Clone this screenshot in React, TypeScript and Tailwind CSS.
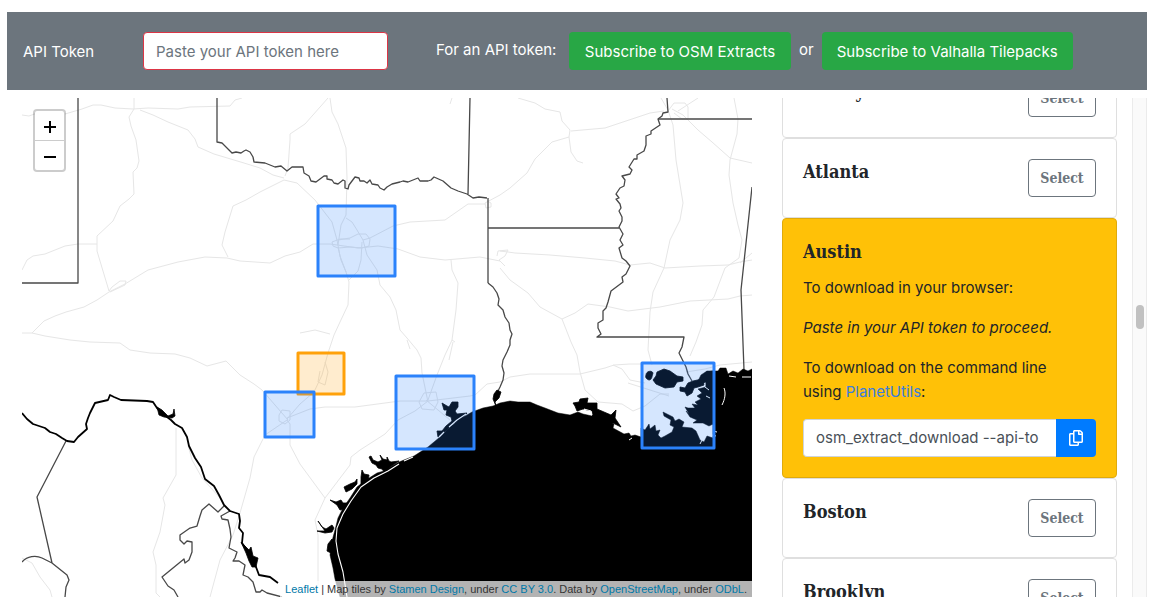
import { useEffect, useRef, useState } from "react";
import { FaRegCopy } from "react-icons/fa";

const CITIES = ["Albany", "Atlanta", "Austin", "Boston", "Brooklyn"];

const SLAB = "font-['DejaVu_Serif_Condensed','DejaVu_Serif',serif] font-bold";

/* Extract bounding boxes, in map units */
const EXTRACTS = [
  { name: "Austin", x: 298, y: 353, w: 46, h: 41 },
  { name: "Dallas", x: 318, y: 206, w: 77, h: 70 },
  { name: "San Antonio", x: 265, y: 392, w: 49, h: 45 },
  { name: "Houston", x: 396, y: 376, w: 78, h: 73 },
  { name: "New Orleans", x: 642, y: 363, w: 72, h: 85 },
];

const ROADS = [
  "M22 115L29 116L40 112M65 114L82 109L93 105L101 105L115 108L133 109L148 108L178 109L190 107L230 106L235 100L242 98",
  "M134 98V109L129 117L131 126L136 140L139 161L137 168L133 172L134 194L129 199L120 206L113 221L97 236V251L109 291",
  "M140 110L153 115L168 122L188 130L195 139L198 147L214 154L244 163L260 168L273 175L284 178",
  "M22 270L27 260L33 256L45 254L65 246L78 244H97",
  "M22 333H32L44 321L55 316L66 312L84 307L97 300L109 292L125 284L148 270L178 262L205 257L227 258L240 261L270 263L285 256L300 252L313 244L330 244L358 248L378 246L398 249L420 257L445 260L480 257L500 261",
  "M109 291L112 287L120 281H126L125 285L110 292",
  "M32 333L45 336L70 340L90 342L120 343L130 350L150 353L175 354L190 358L207 366L226 361L240 375L254 384L262 390L288 420",
  "M228 257L222 245L225 232L233 206L246 200L260 192L284 180L297 183L315 200L332 222L337 240L340 256L346 272L349 282L348 305L340 322L334 335L328 353L322 375L314 392L300 404L287 419",
  "M285 176L288 168L290 140L290 134L305 124L328 98M330 98L332 112L338 124L346 148L347 178L346 215L341 225L338 245",
  "M346 218L352 222L357 230L363 240L367 255L377 270L380 285L390 297L396 310L400 330L407 338L417 350L421 358L422 373L428 402",
  "M338 240L350 238L358 234L366 234L370 239L369 246L362 248L350 247L338 248L333 246L332 242L340 239H350M363 240L370 238L393 226L410 222L445 220L468 204H485",
  "M362 242L361 260L358 271L349 280M338 247L341 260L346 272",
  "M300 333L315 330L330 334M451 260L452 270L458 283L456 310L452 340L445 355L437 375L428 400",
  "M487 201L491 203V207L486 208L485 203L500 195L510 188L527 173L535 159L552 142L569 137L570 130L562 121L560 112L545 109L535 103L518 98",
  "M569 137L571 152L577 161L583 163M571 131L605 128L632 119L650 113L664 111",
  "M500 251L508 252L515 253L550 255L585 258L615 261L630 265L650 263L665 268L700 266L728 265L740 262L752 260",
  "M500 268L510 280L528 293L540 307L562 319L571 342L577 355L580 372L585 390L598 402L622 404L633 411L645 406L660 394L669 394",
  "M497 256L498 251L508 250L505 256L499 260L505 266M562 319L575 313L588 304L610 307L628 311L660 307L690 301L728 299L740 296L752 295",
  "M661 98L668 110L673 125L676 160L683 203L680 220L670 240L664 268L653 292L650 312L648 350L652 365",
  "M668 111L674 103L685 103L688 107V119L682 119L674 113M672 109L683 115L698 130L712 142L730 158L752 163M678 111L698 98",
  "M734 98L738 119L737 134L730 160L729 175L733 203L738 225L742 240L739 258L725 268L714 297L703 310L702 325L696 342L690 356M740 263L752 253",
  "M287 420L290 424V445L300 464L325 498L350 465L351 457L360 450L385 434L398 420L415 411L428 401L470 396L475 395L487 384L500 382L510 377L530 374H580L605 368L614 365L630 364L641 364",
  "M287 418L310 409L325 407L355 407L400 401H428M279 415L282 410L290 411V420L285 424L279 421ZM424 393L436 392L438 402L434 410L422 409L419 402Z",
  "M325 362L328 372L325 385L318 382L320 371M325 498L315 520L318 535V585M287 420L265 435L254 457L250 478L240 513L233 535L220 560L210 597",
  "M613 365L622 369L630 380L645 383M176 428V475L163 498L165 505L160 532L153 552L156 565V593L160 597M22 558L32 563L40 577L50 590L52 597",
  "M188 445L192 460L202 478L220 498M455 342L452 340M426 400L450 420M452 98L450 104",
  "M407 340L410 349M453 342L449 360M628 383L650 390L669 396M686 372L705 369L720 365L752 362",
];

const BORDERS = [
  "M78 98V283H22",
  "M217 98V142L222 143L232 153L236 152L241 153L244 151L246 150L250 152L253 157L254 162L265 163L275 167L281 166L287 171L292 167H303L304 173L309 176L311 181L316 182L324 176L327 176V179L332 180L334 183L338 184L343 180L345 181V188L348 189L349 185L352 181L355 177L359 178L360 181L364 181L367 183L370 180L372 184L378 185L380 188L384 190L387 187L392 184L400 182L403 181L408 182L418 178L420 181L428 181L431 180L434 177L443 181L451 188L458 191L467 194L473 198L479 197L487 198",
  "M470 98L468 194M488 198V283M488 228H619",
  "M488 283L493 287L497 293L499 299L498 305L503 310L505 317L509 323L510 330L512 334L510 340L510 345L507 352L503 360L502 366L504 373L503 380L500 387L497 393",
  "M667 98L668 112L663 113L662 116L658 119L660 125L651 131V134L646 136V145L644 151L637 155L637 159L634 159L629 167L632 170L630 174L622 176L625 180L624 186L620 188L616 194L619 198L616 199L620 204L621 208L619 211L622 217V221L619 227L623 234L620 240L623 245L619 248L622 258L626 261L630 266L626 274L622 277L623 282L611 291L608 302L606 308L603 311V320L598 323V328L601 334L597 337H684L682 347L679 353L682 359L686 367L688 374L692 381",
  "M658 119H752M752 187L741 290L744 370",
  "M66 441L37 497L52 563M22 562C27 556 36 555 42 558L52 563L67 575L69 580L66 587L65 597",
  "M224 506L218 512L209 504L202 510L200 516L197 526L190 528L180 535L180 540L184 544L187 541L192 542V552L189 560L185 563L184 559L162 577L168 586L174 590L178 597",
  "M230 511L221 516L222 519L228 520L230 529L231 537L229 548L237 552L235 558L233 561L239 561L245 565L243 575L248 577L253 582L256 592H260L262 590L267 593L282 597",
];

const RIO_GRANDE =
  "M22 413L27 419L33 424L45 428L50 432L56 434L62 438L67 441L74 442L78 437L87 429L86 424L88 418L90 413L95 403L108 400L110 395L114 397L121 400L147 401L153 402L157 408L163 414L171 420L175 424L182 428L187 437L189 446L195 458L201 467L205 479L214 486L219 495L224 505L230 511L239 514L240 521L239 528L243 533L242 543L249 553L256 567L259 575L270 577L278 583";

const GULF =
  "M752 369L748 371L743 369L738 373L733 371L728 374L726 368L720 368L718 371L707 371L701 375L698 381L702 384L708 381L706 387L698 389L702 393L697 396L701 399L695 402L698 405L692 404L695 408L688 408L685 407L689 414L686 411L690 417L697 420L693 423L703 423L709 426L713 424V438L707 436L704 442L700 440L696 431L692 428L682 427L684 422L679 419L675 421L673 417L663 412L664 416L671 420L670 425L674 427L672 432L665 436L661 438L658 435L660 430L656 431L655 425L650 429L649 424L645 430L641 428V437L635 435L631 436L629 433L624 434L613 428L614 424L609 422L606 420L598 420L593 414L592 416L583 414L578 412L570 415L558 413L545 408L537 405L530 402L518 402L510 401L500 403L493 406L483 408L472 412L462 418L451 426L440 437L428 447L414 456L399 462L392 466L384 471L377 473L366 480L357 487L350 498L343 508L338 518L335 530L332 541L330 555L333 568L335 579L340 597H752Z";

const BAYS = [
  "M442 403L447 406L449 407L452 402L458 402L458 407L455 411L457 414L467 413L461 420L452 424L447 430L438 437L437 431L442 431L446 426L452 421L451 417L446 415L447 410L444 410Z",
  "M369 457L371 456L373 460L378 462L382 460L380 455L383 459L387 460L387 457L389 461L391 462L399 461L390 467L385 473L382 469L378 468L376 465L372 463Z",
  "M362 470L364 474L369 475L368 482L361 486L361 477Z",
  "M344 487L350 484L355 482L357 479V484L352 489L346 492Z",
  "M330 500L336 502L341 500L343 503L348 503L344 509L340 510L337 505Z",
  "M318 521L322 527L326 529L332 525L334 528L332 532L325 533L317 531L325 531Z",
  "M328 544L332 539L336 546L333 554L327 551Z",
  "M497 390L501 392L499 398L495 402L496 406L493 399L494 394Z",
  "M573 403L579 402L580 399L588 398L587 403L597 403L597 409L604 412L611 415L616 410L615 418L621 427L613 423L609 425L598 421L593 417L592 411L583 409L577 411L575 406Z",
  "M653 380L656 376L657 372L664 369L670 371L677 376L683 377V381L677 382L674 387L665 388L656 384Z",
  "M680 387L685 388L688 383L693 381L702 379L704 385L698 387L694 388L692 393L687 396L685 392L680 391Z",
  "M646 375C646 371 652 370 653 373C652 376 652 380 649 380C646 379 645 377 646 375Z",
  "M706 372L713 371V424L706 422Z",
  "M157 407L162 410L168 416L173 414L174 409L175 416L172 418L164 417L159 415Z",
  "M241 542L249 550L251 547L253 556L258 558L256 567L252 567L249 561L246 553Z",
];

function MapDrawing({ selected }: { selected: string }) {
  return (
    <svg
      viewBox="22 98 730 499"
      preserveAspectRatio="xMidYMid slice"
      className="block h-full w-full"
      fill="none"
      strokeLinejoin="round"
      role="img"
      aria-label="Map of available extracts"
    >
      <g stroke="#e6e6e6" strokeWidth="1">
        {ROADS.map((d) => <path key={d} d={d} />)}
      </g>
      <g stroke="#484848" strokeWidth="1.3">
        {BORDERS.map((d) => <path key={d} d={d} />)}
      </g>
      <path d={RIO_GRANDE} stroke="#000" strokeWidth="1.8" />
      <path d={GULF} fill="#000" stroke="#000" strokeWidth="0.5" />
      <g fill="#000" stroke="#000" strokeWidth="0.8">
        {BAYS.map((d) => <path key={d} d={d} />)}
      </g>
      {/* barrier islands */}
      <path
        d="M466 414L457 420L449 427M444 432L439 437M413 457L404 461M399 464L388 471L374 478L361 487L351 501L343 514L337 528L336 541L338 554L343 572L347 597"
        stroke="#fff"
        strokeWidth="1.1"
      />
      <path
        d="M584 409L591 411L592 415L586 412ZM700 444L704 436M724 388C726 393 725 399 722 405M729 376L736 377M742 377H751M713 431L717 432M712 435L716 436M632 438L629 440M705 387L709 390M706 396L710 398"
        stroke="#fff"
        strokeWidth="1"
      />
      <g strokeWidth="3" fillOpacity="0.2">
        {EXTRACTS.map((e) => {
          const color = e.name === selected ? "#ffa10a" : "#2b82fb";
          return <rect key={e.name} x={e.x} y={e.y} width={e.w} height={e.h} stroke={color} fill={color} />;
        })}
      </g>
    </svg>
  );
}

function ExtractMap({ selected }: { selected: string }) {
  const link = "text-[#0078a8]";
  return (
    <div className="relative h-full overflow-hidden bg-white">
      <MapDrawing selected={selected} />
      <div className="absolute left-[11px] top-[11px] flex flex-col rounded border-2 border-black/20 bg-white bg-clip-padding">
        <button aria-label="Zoom in" className="flex h-[30px] w-[29px] items-center justify-center border-b border-[#ccc] pt-0.5">
          <svg width="14" height="14" viewBox="0 0 14 14" stroke="#000" strokeWidth="2"><path d="M1 7H13M7 1V13" /></svg>
        </button>
        <button aria-label="Zoom out" className="flex h-[29px] w-[29px] items-center justify-center pt-0.5">
          <svg width="14" height="14" viewBox="0 0 14 14" stroke="#000" strokeWidth="2"><path d="M1 7H13" /></svg>
        </button>
      </div>
      <div className="absolute bottom-0 right-0 whitespace-nowrap bg-white/70 px-[5px] font-['Liberation_Sans',sans-serif] text-[11px] leading-4 text-[#333]">
        <a href="#leaflet" className={link}>Leaflet</a> | Map tiles by <a href="#stamen" className={link}>Stamen Design</a>, under{" "}
        <a href="#cc-by" className={link}>CC BY 3.0</a>. Data by <a href="#osm" className={link}>OpenStreetMap</a>, under{" "}
        <a href="#odbl" className={link}>ODbL</a>.
      </div>
    </div>
  );
}

function CityCard({ name, active, onSelect }: { name: string; active: boolean; onSelect: () => void }) {
  if (!active) {
    return (
      <li className="flex items-start justify-between rounded border border-[#dfdfdf] bg-white p-5">
        <h5 className={`${SLAB} text-lg leading-[26px]`}>{name}</h5>
        <button
          onClick={onSelect}
          className={`${SLAB} h-[38px] w-[68px] rounded border border-[#6c757d] text-sm text-[#6c757d]`}
        >
          Select
        </button>
      </li>
    );
  }
  return (
    <li className="rounded border border-[#dfaa0c] bg-[#ffc107] p-5">
      <h5 className={`${SLAB} mb-[11px] text-lg leading-[26px]`}>{name}</h5>
      <p className="mb-4">To download in your browser:</p>
      <p className="mb-4 italic">Paste in your API token to proceed.</p>
      <p className="mb-[15px] pr-5">
        To download on the command line using <a href="#planetutils" className="text-[#3b7ddd]">PlanetUtils</a>:
      </p>
      <div className="flex h-[38px]">
        <input
          readOnly
          aria-label="Download command"
          value="osm_extract_download --api-to"
          className="min-w-0 flex-1 rounded-l border border-r-0 border-[#ced4da] bg-white px-3 text-[#495057] outline-none"
        />
        <button aria-label="Copy command" className="flex w-10 items-center justify-center rounded-r bg-[#007bff] text-white">
          <FaRegCopy size={16} />
        </button>
      </div>
    </li>
  );
}

export default function App() {
  const [selected, setSelected] = useState("Austin");
  const listRef = useRef<HTMLDivElement>(null);

  useEffect(() => {
    if (listRef.current) listRef.current.scrollTop = 40;
  }, []);

  const subscribe = "flex h-[38px] items-center justify-center rounded bg-[#28a745] pt-0.5 text-white";

  return (
    <div className="flex h-screen flex-col bg-white pb-1 pl-[7px] pr-[5px] pt-3 font-['Inter',sans-serif] text-[15px] leading-6 text-[#212529]">
      <header className="flex items-center bg-[#6c757d] px-4 py-5 text-white">
        <label htmlFor="token" className="w-[120px] pt-0.5">API Token</label>
        <input
          id="token"
          placeholder="Paste your API token here"
          className="h-[38px] w-[245px] rounded border border-[#dc3545] bg-white px-3 text-[#495057] outline-none placeholder:text-[#6c757d]"
        />
        <div className="ml-12 flex items-center gap-2 whitespace-nowrap">
          <span className="w-[125px] pb-0.5">For an API token:</span>
          <a href="#osm-extracts" className={`${subscribe} w-[222px]`}>Subscribe to OSM Extracts</a>
          <span className="pb-0.5">or</span>
          <a href="#valhalla" className={`${subscribe} w-[251px]`}>Subscribe to Valhalla Tilepacks</a>
        </div>
      </header>

      <main className="mt-2 flex min-h-0 flex-1">
        <section className="w-2/3 px-[15px]">
          <ExtractMap selected={selected} />
        </section>
        <section className="flex w-1/3 pl-[15px]">
          <div ref={listRef} className="min-w-0 flex-1 overflow-y-auto pr-[15px] [scrollbar-width:none]">
            <ul>
              {CITIES.map((city) => (
                <CityCard key={city} name={city} active={city === selected} onSelect={() => setSelected(city)} />
              ))}
            </ul>
          </div>
          <div className="flex w-[15px] flex-col items-center border-x border-[#ebebeb] bg-[#fafafa]">
            <div className="h-[207px]" />
            <div className="h-6 w-2 rounded-full bg-[#c1c1c1]" />
          </div>
        </section>
      </main>
    </div>
  );
}
